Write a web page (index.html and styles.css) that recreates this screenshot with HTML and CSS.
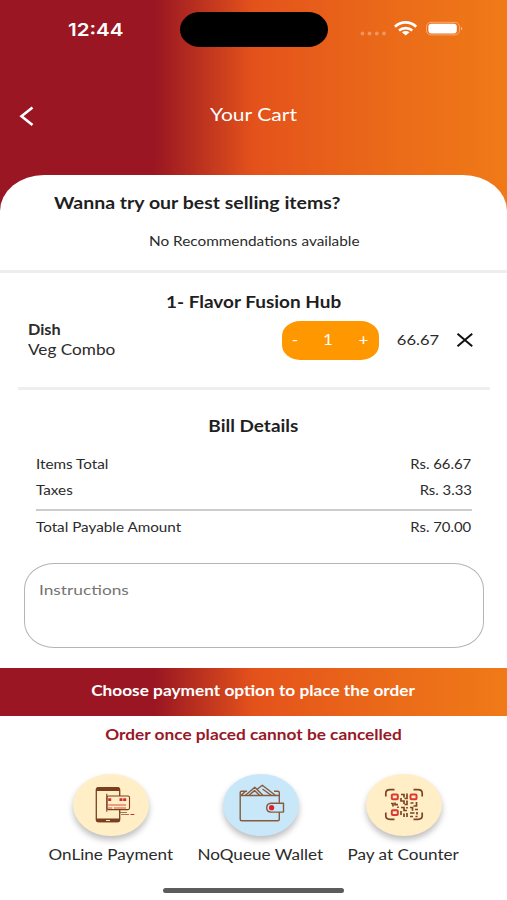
FILE: index.html
```html
<!DOCTYPE html>
<html lang="en">
<head>
<meta charset="utf-8">
<title>Your Cart</title>
<link rel="stylesheet" href="styles.css">
</head>
<body>
<div class="screen">
  <header class="header">
    <div class="status">
      <span class="time">12:44</span>
      <span class="island"></span>
      <svg class="indicators" width="104" height="20" viewBox="0 0 104 20">
        <g fill="#fff" fill-opacity=".3"><circle cx="3.5" cy="14.5" r="1.900"/><circle cx="10.5" cy="14.5" r="1.900"/><circle cx="17.8" cy="14.5" r="1.900"/><circle cx="25" cy="14.5" r="1.900"/></g>
        <g fill="none" stroke="#fff" stroke-width="2.700"><path d="M36 7.7C42 2 51 2 57.200 7.700"/><path d="M40 11.500C44 8.200 49.500 8.200 53.300 11.500"/></g>
        <path d="M46.700 16.400L42.900 13.300C45 11.700 48.400 11.700 50.500 13.300Z" fill="#fff"/>
        <rect x="67.500" y="3.300" width="33" height="12.600" rx="4.500" fill="none" stroke="#fff" stroke-opacity=".4"/>
        <rect x="69.400" y="4.800" width="28.400" height="9.800" rx="3" fill="#fff"/>
        <path d="M102 7.700q2.200 1.800 0 3.600z" fill="#fff" fill-opacity=".6"/>
      </svg>
    </div>
    <div class="nav">
      <svg class="back" width="16" height="22" viewBox="0 0 16 22"><path d="M13.500 2.500L2.500 11.200L13.500 20" fill="none" stroke="#fff" stroke-width="2.600"/></svg>
      <h1 class="title">Your Cart</h1>
    </div>
  </header>

  <main class="sheet">
    <section class="promo">
      <h2 class="heading promo-heading">Wanna try our best selling items?</h2>
      <p class="promo-empty">No Recommendations available</p>
    </section>

    <section class="order">
      <h2 class="heading vendor">1- Flavor Fusion Hub</h2>
      <div class="item">
        <div class="item-name"><strong class="dish">Dish</strong><span class="combo">Veg Combo</span></div>
        <div class="stepper"><span>-</span><span>1</span><span>+</span></div>
        <span class="price">66.67</span>
        <svg class="remove" width="18" height="16" viewBox="0 0 18 16"><path d="M1.500 1.800L16.200 14.200M16.200 1.800L1.500 14.200" fill="none" stroke="#111" stroke-width="2"/></svg>
      </div>
    </section>

    <section class="bill">
      <h2 class="heading bill-heading">Bill Details</h2>
      <div class="row"><span>Items Total</span><span>Rs. 66.67</span></div>
      <div class="row"><span>Taxes</span><span>Rs. 3.33</span></div>
      <div class="row total"><span>Total Payable Amount</span><span>Rs. 70.00</span></div>
    </section>

    <div class="instructions"><span>Instructions</span></div>

    <div class="banner"><span>Choose payment option to place the order</span></div>
    <p class="warning"><span>Order once placed cannot be cancelled</span></p>

    <section class="payments">
      <div class="pay">
        <div class="disc">
          <svg width="76" height="62" viewBox="0 0 76 62">
            <rect x="23.300" y="13.700" width="23.400" height="34" rx="2.500" fill="none" stroke="#7b3f20" stroke-width="1.300"/>
            <path d="M23 17v-1.500q0-2.300 2.500-2.300h19q2.500 0 2.500 2.300V17zM23 44.500h24V46q0 2.300-2.500 2.300h-19Q23 48.300 23 46z" fill="#7b3f20"/>
            <path d="M33 46.500h4" stroke="#ffeec6"/>
            <rect x="34" y="22" width="22.500" height="13.600" rx="1.500" fill="#ffeec6" stroke="#7b3f20" stroke-width="1.100"/>
            <path d="M33.800 19.800v18" stroke="#7b3f20" stroke-width="1.100"/>
            <path d="M35.200 25.700h3M46.500 25.700h3M50.200 25.700h3" stroke="#d52a28" stroke-width="2.800"/>
            <path d="M35.200 31h18M35.200 34h4M41 34h12" stroke="#d84c3e" stroke-width="1.100"/>
            <path d="M47 38.500h7M48 40.500h8" stroke="#7b3f20" stroke-width=".7"/><path d="M57.500 40.500h3.800" stroke="#d52a28"/>
          </svg>
        </div>
        <span class="pay-label">OnLine Payment</span>
      </div>
      <div class="pay">
        <div class="disc disc-blue">
          <svg width="76" height="62" viewBox="0 0 76 62">
            <g fill="none" stroke="#875a3e" stroke-width="1.400" stroke-linejoin="round">
              <path d="M56.300 28.800V18.500q0-1.300-1.400-1.300H51M24 17.200h-5.500q-1.300 0-1.300 1.300V45q0 1.800 1.800 1.800h35.500q1.800 0 1.800-1.800v-7"/>
              <path d="M17.500 21.500H56M17.800 21.500l4.500-4"/>
              <path d="M22.500 21.300l9.300-8 8 8M26 21.300l5.500-4.700 5 4.700M34.500 15l4.800-3.700 13 10M39.500 15l9 6.500"/>
              <path d="M60.500 29.300H48q-4.300.3-4.300 4.400t4.300 4.400h12.500z" fill="#c8e8fa"/>
            </g>
            <circle cx="48.600" cy="33.700" r="2.600" fill="#e01f26"/>
          </svg>
        </div>
        <span class="pay-label">NoQueue Wallet</span>
      </div>
      <div class="pay">
        <div class="disc">
          <svg width="76" height="62" viewBox="0 0 76 62">
            <path d="M19.800 22.500v-3.300q0-3.500 4.200-3.500h4.500M47.500 15.700H52q4.200 0 4.200 3.500v3.300M56.200 38.500v3.300q0 3.500-4.200 3.500h-4.500M28.500 45.300H24q-4.200 0-4.200-3.500v-3.300" fill="none" stroke="#7b4526" stroke-width="1.700"/>
            <g fill="none" stroke="#dc3933" stroke-width="2"><rect x="25.800" y="20.500" width="6" height="4.800" rx="1"/><rect x="44.500" y="20.500" width="6" height="4.800" rx="1"/><rect x="25.800" y="36.300" width="6" height="4.800" rx="1"/></g>
            <g fill="none" stroke="#7b4526" stroke-width="1.700">
              <path d="M35 20.500h3v3M41 19.500v5h-2.500M35 24v3h3v3M41 26.500v4h-2.500M25 29.500h2v3M29 28.500v2.200h3M32 32.500v1.500"/>
              <path d="M35 33.500h3v3h3M35 37v4M38 39.500v3.500M41 33v1.500M41 39v4M44.500 29h3M50.500 28v4h-3M44 33.500h2.500v3.200M49 35.500h3M44 39h4.500M51 38v2.500M44 42.500h3M49.500 42.500h2"/>
            </g>
          </svg>
        </div>
        <span class="pay-label">Pay at Counter</span>
      </div>
    </section>
    <div class="home"></div>
  </main>
</div>
</body>
</html>
```
FILE: styles.css
```css
* { box-sizing: border-box; }

:root {
  --brand: linear-gradient(90deg, #9a1622 0, #9a1622 30.5%, #b9301f 39%, #e4521b 50%, #ea6919 75%, #f07a17 100%);
  --ink: #2b2b2b;
}

body {
  margin: 0;
  font-family: Lato, "Liberation Sans", sans-serif;
  line-height: 20px;
  color: var(--ink);
}

h1, h2, p { margin: 0; }

.screen {
  width: 507px;
  height: 900px;
  overflow: hidden;
  display: flex;
  flex-direction: column;
  background: var(--brand);
}

.header { flex: none; height: 175px; color: #fff; }

/* Wide lettering: glyphs are stretched horizontally around each text's anchor. */
.time, .title, .heading, .promo-empty, .dish, .combo, .stepper span, .price,
.row span, .instructions span, .banner span, .warning span, .pay-label {
  display: inline-block;
  white-space: nowrap;
  transform: scaleX(var(--wide, 1.18));
  transform-origin: center;
}

.status {
  display: grid;
  grid-template-columns: 180px 148px 1fr;
  align-items: center;
  padding-top: 12px;
}

.time {
  --wide: 1.175;
  justify-self: start;
  margin-left: 68px;
  font: 600 17.500px/20px Inter, sans-serif;
  transform-origin: left;
}

.island { height: 35px; border-radius: 20px / 17.500px; background: #000; }
.indicators { margin: -1px 0 0 31px; }

.nav {
  display: grid;
  grid-template-columns: 60px 1fr 60px;
  align-items: center;
  margin-top: 55px;
}

.back { margin: 3px 0 0 18.500px; }
.title { --wide: 1.17; margin-top: -1px; text-align: center; font-size: 18px; font-weight: 400; }

.sheet {
  flex: 1;
  display: flex;
  flex-direction: column;
  background: #fff;
  border-radius: 44px 44px 0 0 / 36px 36px 0 0;
}

.heading { --wide: 1.115; font-size: 17px; font-weight: 700; color: #1f1f1f; }

.promo {
  display: flex;
  flex-direction: column;
  height: 98px;
  padding-top: 17.500px;
  border-bottom: 3px solid #eee;
}

.promo-heading { --wide: 1.147; align-self: flex-start; margin-left: 54px; transform-origin: left; }
.promo-empty { align-self: center; margin: 18.500px 0 0 1px; font-size: 13px; }

.order {
  display: flex;
  flex-direction: column;
  height: 117px;
  margin: 0 17px 0 18px;
  padding-top: 18.500px;
  border-bottom: 3px solid #eee;
}

.vendor { align-self: center; }

.item { display: flex; align-items: center; margin-top: 9.500px; }
.item-name { display: flex; flex-direction: column; width: 254px; margin: -2px 0 0 10px; }
.dish, .combo { font-size: 14.500px; line-height: 19.500px; transform-origin: left; }
.dish { --wide: 1.12; align-self: flex-start; }
.combo { --wide: 1.185; align-self: flex-start; }

.stepper {
  display: grid;
  grid-template-columns: 26px 40px 31px;
  align-items: center;
  text-align: center;
  width: 97px;
  height: 39px;
  border-radius: 18px / 15px;
  background: #ff9800;
  color: #fff;
  font-size: 14.500px;
  padding-bottom: 1px;
}

.price { width: 36px; margin: -1px 0 0 20.500px; font-size: 14px; text-align: center; }
.remove { margin: -1px 0 0 20.500px; }

.bill { display: flex; flex-direction: column; padding: 26px 35.500px 0 36px; }
.bill-heading { align-self: center; margin-bottom: 18.500px; }

.row {
  display: flex;
  justify-content: space-between;
  margin-bottom: 6px;
  font-size: 12.500px;
}

.row span { --wide: 1.19; transform-origin: right; }
.row span:first-child { --wide: 1.22; transform-origin: left; }
.total { margin: 2.500px 0 0; padding-top: 7px; border-top: 2.500px solid #ccc; }

.instructions {
  height: 85px;
  margin: 25px 23px 0 24px;
  padding: 16px 0 0 13.500px;
  border: 1.500px solid #b5b5b5;
  border-radius: 30px / 26px;
  color: #757575;
  font-size: 14px;
}

.instructions span { --wide: 1.235; transform-origin: left; }

.banner {
  display: grid;
  place-items: center;
  height: 48px;
  margin-top: 20px;
  padding-bottom: 2px;
  background: var(--brand);
  color: #fff;
  font-size: 14.500px;
  font-weight: 700;
}

.warning {
  margin-top: 8.500px;
  text-align: center;
  color: #971827;
  font-size: 14.500px;
  font-weight: 700;
}

.banner span, .warning span { --wide: 1.19; }

.payments {
  display: grid;
  grid-template-columns: 150px 150px 136px;
  margin: 29.500px 35.500px 0;
}

.pay { display: flex; flex-direction: column; align-items: center; }

.disc {
  width: 76px;
  height: 62px;
  border-radius: 50%;
  background: #ffeec6;
  box-shadow: 0 4px 6px rgba(0, 0, 0, .26);
}

.disc-blue { background: #c8e8fa; }
.pay-label { margin-top: 9px; font-size: 14.500px; }

.home {
  width: 181px;
  height: 5px;
  margin: 22.500px 0 0 163px;
  border-radius: 3px;
  background: #5c5c5c;
}
```
